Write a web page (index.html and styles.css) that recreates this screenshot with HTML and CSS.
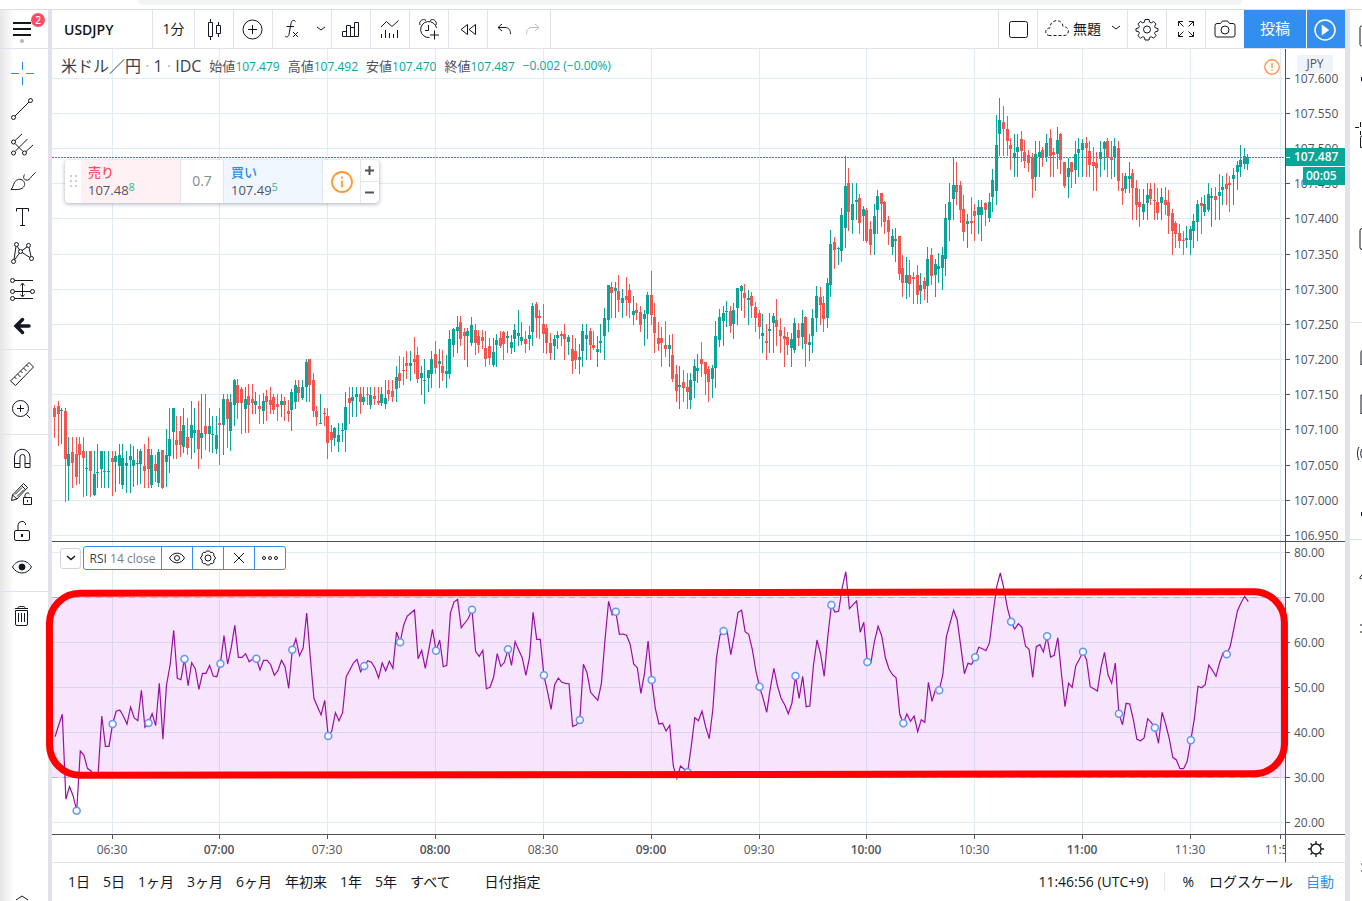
FILE: index.html
```html
<!DOCTYPE html>
<html lang="ja">
<head>
<meta charset="utf-8">
<title>USDJPY</title>
<link rel="stylesheet" href="styles.css">
</head>
<body>
<div class="page">
  <div class="browser-strip"><div class="address-pill"></div></div>
  <div class="workspace">
    <nav class="rail" aria-label="描画ツール">
      <button class="menu-btn" aria-label="メニュー">
        <svg class="icon" viewBox="0 0 28 28"><path d="M5 8h18M5 14h18M5 20h18" stroke-width="2"/></svg>
        <span class="badge">2</span><span class="dot"></span>
      </button>
      <div class="group">
        <button class="tool" aria-label="十字"><svg class="icon blue" viewBox="0 0 28 28"><path d="M14.5 3v8M14.5 18v8M3 14.5h8M18 14.5h8"/></svg></button>
        <button class="tool" aria-label="トレンドライン"><svg class="icon" viewBox="0 0 28 28"><circle cx="5.5" cy="22.5" r="2"/><circle cx="22.5" cy="5.5" r="2"/><path d="M7 21L21 7"/></svg></button>
        <button class="tool" aria-label="ピッチフォーク"><svg class="icon" viewBox="0 0 28 28"><circle cx="5.5" cy="11" r="2"/><circle cx="5.5" cy="22" r="2"/><circle cx="16.5" cy="22" r="2"/><path d="M7 9.500l7-6.500M7 20.500L19.500 8M18 20.500l7-6.500M7 12.500l8 8"/></svg></button>
        <button class="tool" aria-label="ブラシ"><svg class="icon" viewBox="0 0 28 28"><path d="M3 22.500c2-2 2-4 3.500-7 2-3.500 6-4 8.500-2 2.500 2.500 2 5.500-.5 7.500-2.500 2-6.500 1.500-11.500 1.500zM16.500 7.500c-1.500 2.500-1 5 1.500 5.500 2.500.5 4-1 5.500-3.500l4-4"/></svg></button>
        <button class="tool" aria-label="テキスト"><svg class="icon" viewBox="0 0 28 28"><path d="M8.500 8.500v-3h12v3M14.500 5.500v17M12 22.500h5"/></svg></button>
        <button class="tool" aria-label="パターン"><svg class="icon" viewBox="0 0 28 28"><circle cx="8.500" cy="5.500" r="2"/><circle cx="20.500" cy="6.500" r="2"/><circle cx="12.500" cy="12.500" r="2"/><circle cx="5.500" cy="22.500" r="2"/><circle cx="23.500" cy="19.500" r="2"/><path d="M8 7.500L6 20.500M9.500 7.500l2 3.500M14 11.500L19 8M21 8.500l2 9M6.500 21l5-7M14 13.500l8 5"/></svg></button>
        <button class="tool" aria-label="予測"><svg class="icon" viewBox="0 0 28 28"><circle cx="4.500" cy="5.500" r="2"/><circle cx="4.500" cy="16.500" r="2"/><circle cx="4.500" cy="23.500" r="2"/><circle cx="24.500" cy="16.500" r="2"/><path d="M6.500 5.500H25M6.500 16.500h16M6.500 23.500H25M14.500 9v12M12.500 10.500l2-2.500 2 2.500M12.500 19.500l2 2.500 2-2.500"/></svg></button>
        <button class="tool" aria-label="戻る矢印"><svg class="icon" viewBox="0 0 28 28"><path d="M21 15H9M14.500 8.500L8 15l6.500 6.500" stroke-width="3.500" stroke-linecap="round"/></svg></button>
      </div>
      <div class="group">
        <button class="tool" aria-label="定規"><svg class="icon" viewBox="0 0 28 28"><path d="M21 2.500l4.500 4.500L7.500 25.500 2.500 21zM18.500 5l2 2M15.500 8l3 3M12.500 11l2 2M9.500 14l3 3M6.500 17l2 2"/></svg></button>
        <button class="tool" aria-label="ズーム"><svg class="icon" viewBox="0 0 28 28"><circle cx="12.500" cy="12.500" r="8"/><path d="M12.500 9v7M9 12.500h7M18.500 18.500L22 22"/></svg></button>
      </div>
      <div class="group">
        <button class="tool" aria-label="マグネット"><svg class="icon" viewBox="0 0 28 28"><path d="M6.500 22.500V12a7.500 7.500 0 0 1 15.500 0v10.500h-5V12a2.500 2.500 0 0 0-5 0v10.500zM6.500 18.500H12M17 18.500h5"/></svg></button>
        <button class="tool" aria-label="描画を維持"><svg class="icon" viewBox="0 0 28 28"><path d="M3.500 19.500l1-5.500L15.500 2.500l4 4L9 18zM4.500 14l4.500 4M13.500 4.500l4 4M7 13.500l7-7M9 15.500l7-7M15.500 16.500h8v7h-8zM17 16.500V14a2.500 2.500 0 0 1 4.500-1"/><path d="M19.500 19v2"/></svg></button>
        <button class="tool" aria-label="ロック"><svg class="icon" viewBox="0 0 28 28"><rect x="6.500" y="13.500" width="15" height="10" rx="1.500"/><path d="M10 13.500V8a4 4 0 0 1 7.500-1.500v1.500"/><path d="M14 17v3" stroke-width="2"/></svg></button>
        <button class="tool" aria-label="表示"><svg class="icon" viewBox="0 0 28 28"><path d="M4.500 14c4.500-8 14.500-8 19 0-4.500 8-14.500 8-19 0z"/><circle cx="14" cy="14" r="3" class="solid"/></svg></button>
      </div>
      <div class="group last">
        <button class="tool" aria-label="削除"><svg class="icon" viewBox="0 0 28 28"><path d="M7 6.500h13M10 6.500c0-2 1-2 3.500-2s3.500 0 3.500 2M7.500 8.500h12V22a1.500 1.500 0 0 1-1.500 1.500H9A1.500 1.500 0 0 1 7.500 22zM10.500 11v9M13.500 11v9M16.500 11v9"/></svg></button>
      </div>
      <button class="rail-more" aria-label="さらに表示"><svg class="caret" viewBox="0 0 14 7"><path d="M1 6l6-4 6 4"/></svg></button>
    </nav>

    <main class="main">
      <header class="topbar">
        <button class="cell symbol">USDJPY</button>
        <button class="cell interval">1分</button>
        <button class="cell sq" aria-label="ローソク足"><svg class="icon" viewBox="0 0 28 28"><path d="M8.500 7.500h4v14h-4zM10.500 4v3.500M10.500 21.500V25M16.500 10.500h4v8h-4zM18.500 7v3.500M18.500 18.500V22"/></svg></button>
        <button class="cell sq" aria-label="比較"><svg class="icon" viewBox="0 0 28 28"><circle cx="13.500" cy="14.500" r="9.500"/><path d="M13.500 10v9M9 14.500h9"/></svg></button>
        <button class="cell wide" aria-label="インジケーター"><svg class="icon" viewBox="0 0 28 28"><path d="M17.500 6.500c-.5-1.500-4-2-4.500 2l-2 11c-.5 2.500-2.500 3-4 1.500M8.500 11.500h7.500M15 17l5 5M20 17l-5 5"/></svg><svg class="chev" viewBox="0 0 10 6"><path d="M1 1l4 3 4-3"/></svg></button>
        <button class="cell sq" aria-label="財務"><svg class="icon" viewBox="0 0 28 28"><path d="M5.500 16.500h4v5h-4zM9.500 10.500h4v11h-4zM13.500 12.500h4v9h-4zM17.500 7.500h4v14h-4z"/></svg></button>
        <button class="cell sq" aria-label="テンプレート"><svg class="icon" viewBox="0 0 28 28"><path d="M5 12l5.500-5.500 5.500 5 6.500-6M5.500 19v4M9.500 15v8M13.500 18v5M17.500 19v4M21.500 15v8"/></svg></button>
        <button class="cell sq" aria-label="アラート"><svg class="icon" viewBox="0 0 28 28"><path d="M21.500 13a8 8 0 1 0-7 9.500M5 10c-1.500-4 3-7 6-4.500M21 10c1.500-4-3-7-6-4.500M13.500 10v5.500H10M19.500 15.500v9M15 20h9"/></svg></button>
        <button class="cell sq" aria-label="リプレイ"><svg class="icon" viewBox="0 0 28 28"><path d="M13.500 9.500v10l-6.500-5zM21.500 9.500v10l-6.500-5z"/></svg></button>
        <div class="cell history">
          <button aria-label="元に戻す"><svg class="icon" viewBox="0 0 28 28"><path d="M11 9l-4 3.500 4 3.500M7 12.500h7c4 0 5.500 3 5.500 6.500"/></svg></button>
          <button aria-label="やり直し" disabled><svg class="icon faint" viewBox="0 0 28 28"><path d="M16 9l4 3.500-4 3.500M20 12.500h-7c-4 0-5.500 3-5.500 6.500"/></svg></button>
        </div>
        <div class="spacer"></div>
        <button class="cell sq left" aria-label="レイアウト"><svg class="icon" viewBox="0 0 28 28"><rect x="5.500" y="6.500" width="18" height="16" rx="2"/></svg></button>
        <button class="cell layout left"><svg class="icon" viewBox="0 0 28 28"><path class="dashed" d="M6 21.500C0 21.500.5 14 6 14 6 4.500 18.500 4.500 19 12.500c7 0 7 9 1 9z"/></svg><span>無題</span><svg class="chev" viewBox="0 0 10 6"><path d="M1 1l4 3 4-3"/></svg></button>
        <button class="cell sq left" aria-label="設定"><svg class="icon" viewBox="0 0 28 28"><path d="M12 4.500h4l.5 2.600 1.800.8 2.200-1.500 2.600 2.600-1.500 2.200.8 1.800 2.600.5v2.600l-2.600.5-.8 1.800 1.500 2.200-2.600 2.600-2.200-1.500-1.800.8-.5 2.500h-4l-.5-2.500-1.800-.8-2.200 1.500-2.600-2.600 1.500-2.200-.8-1.800-2.600-.5v-2.600l2.600-.5.8-1.800-1.500-2.200 2.600-2.600 2.200 1.500 1.800-.8z"/><circle cx="14" cy="14.500" r="3.500"/></svg></button>
        <button class="cell sq left" aria-label="全画面"><svg class="icon" viewBox="0 0 28 28"><path d="M6.500 11V6.500H11M6.500 6.500l5 5M17 6.500h4.500V11M21.500 6.500l-5 5M6.500 17v4.500H11M6.500 21.500l5-5M17 21.500h4.500V17M21.500 21.500l-5-5"/></svg></button>
        <button class="cell sq left" aria-label="スナップショット"><svg class="icon" viewBox="0 0 28 28"><path d="M6 8.500h3.500L11.500 6h5L18.500 8.500H22a2 2 0 0 1 2 2V20a2 2 0 0 1-2 2H6a2 2 0 0 1-2-2v-9.500a2 2 0 0 1 2-2z"/><circle cx="14" cy="15" r="4"/></svg></button>
        <button class="publish">投稿</button>
        <button class="play" aria-label="再生"><svg class="icon white" viewBox="0 0 28 28"><circle cx="14" cy="15" r="10"/><path class="solid" d="M11.500 11v8l5.500-4z"/></svg></button>
      </header>

      <section class="chart">
        <div class="pane">
          <svg class="plot" id="price-plot"></svg>
          <div class="legend">
            <span class="title">米ドル／円 <i>·</i> 1 <i>·</i> IDC</span>
            <span class="ohlc">始値<b>107.479</b></span>
            <span class="ohlc">高値<b>107.492</b></span>
            <span class="ohlc">安値<b>107.470</b></span>
            <span class="ohlc">終値<b>107.487</b></span>
            <b class="change">−0.002 (−0.00%)</b>
          </div>
          <svg class="warn" viewBox="0 0 16 16"><circle cx="8" cy="8" r="7.200"/><path d="M8 4v5M8 10.500v1.500"/></svg>
          <div class="order">
            <span class="grip"><svg viewBox="0 0 7 13"><path d="M0 1h2M5 1h2M0 6h2M5 6h2M0 11h2M5 11h2"/></svg></span>
            <button class="side sell"><strong>売り</strong><span>107.48<sup>8</sup></span></button>
            <span class="spread">0.7</span>
            <button class="side buy"><strong>買い</strong><span>107.49<sup>5</sup></span></button>
            <button class="info" aria-label="情報"><svg viewBox="0 0 24 24"><circle cx="12" cy="12" r="10"/><path d="M12 10.500v7M12 6.500v2"/></svg></button>
            <span class="steps"><button aria-label="増やす"><svg viewBox="0 0 9 9"><path d="M4.500 0v9M0 4.500h9"/></svg></button><button aria-label="減らす"><svg viewBox="0 0 9 9"><path d="M0 4.500h9"/></svg></button></span>
          </div>
        </div>
        <div class="axis">
          <svg class="plot" id="price-axis"></svg>
          <button class="currency">JPY</button>
        </div>

        <div class="pane lower">
          <svg class="plot" id="rsi-plot"></svg>
          <div class="rsi-head">
            <button class="fold" aria-label="折りたたむ"><svg class="chev" viewBox="0 0 10 6"><path d="M1 1l4 3.500 4-3.500" stroke-width="1.500"/></svg></button>
            <div class="rsi-box">
              <button class="rsi-name">RSI <em>14 close</em></button>
              <button aria-label="表示"><svg viewBox="0 0 20 20"><path d="M2.500 10c3.500-6.500 11.500-6.500 15 0-3.500 6.500-11.500 6.500-15 0z"/><circle cx="10" cy="10" r="2.500"/></svg></button>
              <button aria-label="設定"><svg viewBox="0 0 20 20"><path d="M8.500 3h3l1 1.500 2-.2 1.500 1.700-.2 2L17.200 9v2l-1.400 1 .2 2-1.500 1.700-2-.2-1 1.500h-3l-1-1.500-2 .2L4 14l.2-2L2.800 11V9l1.400-1L4 6l1.500-1.700 2 .2z"/><circle cx="10" cy="10" r="3"/></svg></button>
              <button aria-label="削除"><svg viewBox="0 0 20 20"><path d="M5 5l10 10M15 5L5 15"/></svg></button>
              <button aria-label="その他"><svg viewBox="0 0 20 20"><circle cx="4" cy="10" r="1.500"/><circle cx="10" cy="10" r="1.500"/><circle cx="16" cy="10" r="1.500"/></svg></button>
            </div>
          </div>
          <div class="marker"></div>
        </div>
        <div class="axis lower"><svg class="plot" id="rsi-axis"></svg></div>

        <div class="times"><svg class="plot" id="time-axis"></svg></div>
        <div class="times corner"><button aria-label="スケール設定"><svg viewBox="0 0 18 18"><circle cx="9" cy="9" r="5"/><path d="M9 1v3M9 14v3M1 9h3M14 9h3M3.500 3.500l2 2M12.500 12.500l2 2M14.500 3.500l-2 2M5.500 12.500l-2 2"/></svg></button></div>
      </section>

      <footer class="bottombar">
        <button>1日</button><button>5日</button><button>1ヶ月</button><button>3ヶ月</button><button>6ヶ月</button><button>年初来</button><button>1年</button><button>5年</button><button>すべて</button><button class="goto">日付指定</button>
        <div class="spacer"></div>
        <button class="clock">11:46:56 (UTC+9)</button>
        <button class="pct">%</button><button>ログスケール</button><button class="auto">自動</button>
      </footer>
    </main>

    <aside class="side-strip">
      <svg class="strip-icons"><path d="M13 16h-1.500a1.500 1.500 0 0 0-1.500 1.500v17a1.500 1.500 0 0 0 1.500 1.500H13M13 218.500h-1a2 2 0 0 0-2 2v17a2 2 0 0 0 2 2h1M5 117.500h4M10.500 112v5M10.500 121v4M13 126h-1a1.500 1.500 0 0 0-1.500 1.500v10h2M13 340l-2 1.500V355l2-2M13 385h-2v19l2-2M9 437c-2 3-2 10 0 13M13 438c-3 2-3 9 0 11M13 564l-2 2c-2 2-1 4 1 2M10 615h2M10 622h2M11 854h2M11 861h2"/><path class="thick" d="M11 69h2M11 504h2"/><path class="rule" d="M0 312.500h12M0 529.500h12"/></svg>
    </aside>
  </div>
</div>
<script src="chart.js"></script>
</body>
</html>
```

FILE: styles.css
```css
* { box-sizing: border-box; }
body {
  margin: 0;
  background: #fff;
  color: #131722;
  font-family: "Open Sans", "Noto Sans CJK JP", sans-serif;
  font-size: 14px;
}
button {
  margin: 0;
  padding: 0;
  border: 0;
  background: none;
  color: inherit;
  font: inherit;
  cursor: pointer;
}
svg {
  display: block;
  fill: none;
  stroke: currentColor;
  stroke-width: 1;
}
.page { display: flex; flex-direction: column; height: 100vh; min-height: 760px; overflow: hidden; }
.browser-strip { flex: none; height: 10px; padding: 0 120px 0 138px; border-bottom: 1px solid #dadce0; }
.address-pill { height: 5px; border-radius: 0 0 10px 10px; background: #f1f3f4; }
.workspace { flex: 1; display: flex; min-height: 0; }
.spacer { flex: 1; }
.icon { width: 28px; height: 28px; flex: none; }
.icon .solid { fill: currentColor; }
.blue { color: #2a8cf0; }
.white { color: #fff; stroke-width: 1.5; }
.faint { color: #b8bbc4; }
.chev { width: 10px; height: 6px; }
.dashed { stroke-dasharray: 3 2; }

/* drawing tools */
.rail {
  flex: none;
  width: 52px;
  display: flex;
  flex-direction: column;
  border-right: 4px solid #e0e3eb;
  background: linear-gradient(90deg, #e6e6e6, #fff 14px);
  overflow: hidden;
}
.menu-btn { position: relative; height: 39px; padding: 0 12px 0 8px; border-bottom: 1px solid #e0e3eb; }
.badge {
  position: absolute;
  top: 3px;
  right: 3px;
  width: 14px;
  height: 14px;
  border-radius: 7px;
  background: #ff4a68;
  color: #fff;
  font-size: 10px;
  font-weight: 600;
  line-height: 14px;
}
.dot { position: absolute; left: 20px; bottom: 5px; width: 4px; height: 4px; border-radius: 2px; background: #b2b5be; }
.group { padding: 6px 0; border-bottom: 1px solid #e0e3eb; }
.group.last { border: 0; }
.tool { display: flex; align-items: center; width: 48px; height: 36px; padding-left: 8px; }
.rail-more { margin-top: auto; height: 7px; padding-left: 15px; overflow: hidden; }
.caret { width: 14px; height: 7px; }

/* top toolbar */
.main { flex: 1; min-width: 0; display: flex; flex-direction: column; }
.topbar { flex: none; display: flex; height: 39px; border-bottom: 1px solid #e0e3eb; }
.cell { flex: none; display: flex; align-items: center; justify-content: center; border-right: 1px solid #e0e3eb; }
.cell.left { border-right: 0; border-left: 1px solid #e0e3eb; }
.cell.sq { width: 39px; }
.cell.wide { width: 59px; gap: 10px; }
.symbol { width: 101px; justify-content: flex-start; padding-left: 12px; font-size: 14px; font-weight: 600; }
.interval { width: 42px; padding-bottom: 2px; }
.history { width: 63px; }
.layout { width: 90px; gap: 1px; padding-bottom: 2px; }
.layout .chev { margin-left: 9px; }
.publish { width: 62px; padding-bottom: 3px; background: #338fef; color: #fff; font-size: 15px; }
.play { width: 39px; padding-left: 4px; border-left: 1px solid #fff; background: #338fef; }

/* chart grid */
.chart {
  flex: 1;
  min-height: 0;
  display: grid;
  grid-template-columns: minmax(0, 1fr) 60px;
  grid-template-rows: minmax(0, 1fr) 293px 28px;
}
.pane, .axis, .times { position: relative; min-width: 0; min-height: 0; }
.axis { border-left: 1px solid #50535e; }
.lower, .times { border-top: 1px solid #50535e; }
.plot { position: absolute; inset: 0; width: 100%; height: 100%; overflow: hidden; shape-rendering: crispEdges; }
.plot text { fill: #50535e; stroke: none; font-size: 12px; }
.plot .hour { font-weight: 600; }
.plot .tag-text { fill: #fff; font-weight: 600; }
.plot .grid { stroke: #e1ecf2; }
.plot .tick { stroke: #50535e; }
.plot .up { fill: #08a699; stroke: none; }
.plot .down { fill: #f7544f; stroke: none; }
.plot .last { stroke: #08a699; stroke-dasharray: 2 1; }
.plot .band { fill: rgba(180, 45, 235, 0.12); stroke: none; }
.plot .limit { stroke: #b9b4c0; stroke-dasharray: 6 5; }
.plot .rsi { stroke: #990fa3; stroke-width: 1.2; shape-rendering: auto; }
.plot .knot { fill: #fbf6ff; stroke: #6299f0; stroke-width: 1.5; shape-rendering: auto; }
.legend {
  position: absolute;
  top: 4px;
  left: 6px;
  display: flex;
  align-items: center;
  gap: 8px;
  height: 24px;
  padding: 0 3px;
  color: #50535e;
  font-size: 13px;
  white-space: nowrap;
}
.title { color: #3c404b; font-size: 16px; }
.title i { color: #b2b5be; font-style: normal; }
.legend b { color: #08a699; font-size: 12px; font-weight: 500; }
.warn { position: absolute; top: 10px; right: 5px; width: 16px; height: 16px; color: #ff9850; stroke-width: 1.5; }
.order {
  position: absolute;
  top: 111px;
  left: 13px;
  display: flex;
  height: 43px;
  border-radius: 4px;
  background: #fff;
  box-shadow: 0 1px 4px rgba(60, 70, 100, 0.45);
  overflow: hidden;
}
.grip { display: flex; align-items: center; padding: 0 4px 0 5px; color: #ccced4; }
.grip svg { width: 7px; height: 13px; stroke-width: 2; }
.side { width: 100px; padding: 0 0 2px 7px; text-align: left; color: #50535e; font-size: 13px; line-height: 18px; }
.side strong, .side span { display: block; }
.side strong { font-size: 13px; font-weight: 500; }
.side sup { color: #1fbf8f; font-size: 11px; line-height: 0; vertical-align: 4px; }
.sell { background: #fff1f3; border-right: 1px solid #e4e7ee; }
.sell strong { color: #ff4a68; }
.buy { background: #f0f6ff; border-right: 1px solid #e4e7ee; border-left: 1px solid #e4e7ee; }
.buy strong { color: #2a8cf0; }
.spread { width: 42px; color: #868993; line-height: 42px; text-align: center; }
.info { width: 37px; padding-left: 7px; color: #ff9a33; }
.info svg { width: 24px; height: 24px; stroke-width: 1.8; }
.steps { display: flex; flex-direction: column; width: 19px; border-left: 1px solid #e4e7ee; color: #50535e; }
.steps button { flex: 1; padding-left: 4px; }
.steps button + button { border-top: 1px solid #e4e7ee; }
.steps svg { width: 9px; height: 9px; stroke-width: 2; }
.currency { position: absolute; top: 6px; left: 11px; width: 36px; height: 18px; border-radius: 3px; background: #f0f3fa; color: #50535e; font-size: 12px; line-height: 18px; }
.rsi-head { position: absolute; top: 4px; left: 8px; display: flex; align-items: center; gap: 2px; }
.fold { display: flex; align-items: center; justify-content: center; width: 21px; height: 21px; border: 1px solid #d1d4dc; border-radius: 3px; background: #fff; }
.rsi-box { display: flex; height: 24px; border: 1px solid #338fef; border-radius: 3px; background: #fff; overflow: hidden; }
.rsi-box button { width: 31px; padding: 0 5px; border-left: 1px solid #338fef; }
.rsi-box .rsi-name { width: 77px; padding: 0; border: 0; color: #3c404b; font-size: 12px; white-space: nowrap; }
.rsi-name em { color: #787b86; font-style: normal; }
.rsi-box svg { width: 20px; height: 20px; }
.marker {
  position: absolute;
  z-index: 2;
  top: 47px;
  right: -3px;
  left: -6px;
  height: 189px;
  border: 7px solid #f00;
  border-radius: 34px;
  transform: rotate(-0.07deg);
  pointer-events: none;
}
.corner { display: flex; align-items: center; justify-content: center; border-left: 1px solid #50535e; }
.corner svg { width: 18px; height: 18px; stroke-width: 1.3; }

/* bottom toolbar */
.bottombar { flex: none; display: flex; align-items: center; gap: 14px; height: 39px; padding: 0 11px 2px 16px; border-top: 1px solid #e0e3eb; white-space: nowrap; }
.bottombar button + button { margin-left: -1px; }
.bottombar .goto { margin-left: 20px; }
.clock { padding-right: 16px; border-right: 1px solid #e0e3eb; }
.pct { padding: 0 2px 0 4px; }
.auto { color: #338fef; }

/* right sidebar edge */
.side-strip { flex: none; width: 17px; border-left: 5px solid #e0e3eb; overflow: hidden; }
.strip-icons { width: 12px; height: 100%; }
.strip-icons .thick { stroke-width: 4; }
.strip-icons .rule { stroke: #e0e3eb; }
```

FILE: chart.js
```javascript
const NS = "http://www.w3.org/2000/svg";

function add(parent, name, attrs, text) {
  const el = document.createElementNS(NS, name);
  for (const key in attrs) el.setAttribute(key, attrs[key]);
  if (text !== undefined) el.textContent = text;
  parent.appendChild(el);
  return el;
}
const byId = (id) => document.getElementById(id);

/* One bar per minute from 06:14. */
const barX = (i) => 2.6 + 3.594 * i;

/* Each series part: vertical offset of the part, then bars as
   direction + high, body top, body bottom, low (three units per pixel). */
const series = [
  [151, `r615 625 651 713,r603 618 641 738,g625 630 633 731,r624 633 776 905,g711 762 797 903,r711 756 788 863,r711 762 830 855,r711 733 765 851,r711 753 773 891,g753 803 806 888,r753 753 812 891,g753 822 885 887,g732 815 818 863,g753 753 807 863,g753 812 815 863,g753 812 815 863,r753 774 786 888,g753 768 786 875,g732 765 797 851,g732 774 855 866,g753 788 797 878,g732 768 780 878,g738 780 797 861,g747 788 791 855,g747 753 792 851,r732 797 812 863,r711 747 807 863,g747 765 855 863,r765 792 812 845,g747 756 849 861,r750 750 863 866,g687 765 785 861,g625 717 768 818,g625 625 695 776,r648 720 735 776,r648 693 735 771,g625 675 741 759,r653 711 744 765,g603 675 714 777,g625 690 699 759,r603 690 747 806`],
  [231, `g342 459 473 537,r342 438 461 510,g384 438 461 516,g408 461 464 519,g408 465 507 522,r384 429 435 555,g342 357 435 525,r342 357 416 504,g342 366 453 513,g297 300 375 438,r297 315 368 417,r321 327 369 462,g321 357 387 459,r312 348 375 459,r312 357 369 402,g336 363 374 402,r345 378 387 432,g339 363 393 432,r330 348 366 423,r321 360 375 402,r342 351 390 402,r342 372 381 423,g342 363 375 411,r351 363 374 423,r360 393 402 426,g327 336 390 453,g300 315 366 387,r300 321 339 366,g300 321 354 360,g237 246 321 366,r237 237 315 366,r279 300 393 411,r378 393 411 438,g342 429 432 432,r384 399 402 438,r384 408 489 537,r435 456 480 516,g441 444 474 498,g429 465 486 516,g429 450 453 486,g336 381 450 516,r321 354 369 432,g321 351 363 411,g321 342 351 411,r321 342 366 402,g321 351 366 375,r321 342 345 375,g321 345 375 387,r321 348 357 375,r321 363 369 375,g321 342 369 378,g300 354 372 387,r300 330 342 363,r300 333 351 366,g258 291 327 366,r228 279 303 324,r231 270 273 315,r213 249 258 297,g213 249 258 303,r171 237 246 282,r201 225 297 309,g258 279 294 345,g237 300 303 372,g270 270 294 336,g213 237 282 324,r183 222 264 282,g207 243 252 324,r210 258 279 303,g225 273 282 324,g150 177 282 297,g144 147 195 231,g108 141 153 219,r108 126 177 198,r144 156 168 240,g144 153 168 261,g111 135 189 198,r132 150 189 225,r150 168 195 219,r150 171 183 207,r153 204 237 261,r174 198 234 255,g174 216 255 261,g162 180 195 261,r153 174 198 204,r153 156 192 240,g153 168 174 219,g165 186 204 222,g132 150 177 216,g90 159 168 198`],
  [191, `g246 291 303 315,r273 297 312 339,g258 285 297 330,g189 198 276 318,r186 192 234 294,r210 228 234 297,r192 252 282 339,r252 264 309 342,r279 309 339 360,g285 297 318 360,g273 285 294 327,r273 282 288 318,r252 282 297 360,g285 291 306 345,r285 327 363 402,r294 333 360 387,g312 351 360 402,g252 273 333 381,g252 285 297 360,r264 273 315 360,r273 315 324 330,g288 327 336 381,g252 303 309 339,g204 234 288 360,g135 135 240 276,r126 141 159 234,g126 144 153 234,r105 153 180 216,g147 174 189 234,r111 168 180 228,r132 150 189 234,g168 213 225 255,r189 210 219 240,r198 216 255 276,g210 222 237 318,g156 165 222 297,r93 165 225 255,r189 231 279 339,r246 294 312 333,r261 294 309 381,r243 315 327 351,g285 315 327 381,r282 345 417 426,r375 402 453 486,g378 435 441 507,r390 426 444 486,r399 441 456 507,g399 420 480 507,g357 378 423 474,g342 384 393 429,r306 357 372 411,r366 366 402 465,r378 387 426 486,g375 384 417 474,g243 288 384 444,g207 231 300 321,g198 219 243 318,g183 213 216 261,r198 213 258 279,g189 210 252 297,g144 144 204 255,g135 138 153 213,r132 159 174 234,g150 174 180 255,r156 168 198 234,r186 201 234 276,r210 219 261 297,g222 279 288 339,r252 303 309 360,g219 267 273 339,g219 228 249 339,r177 240 261 318,r234 270 288 339,r261 288 297 381,r276 291 315 345,g279 297 324 381,g234 249 330 339,r249 270 294 318,g210 249 291 327,r228 231 312 381,g282 306 315 363,g207 234 288 339,g138 168 234 276,r141 171 195 255,r168 189 237 276,g114 129 234 264`],
  [41, `g420 462 585 621,r441 456 480 537,g471 474 477 525,g354 375 483 516,g198 288 414 474,r234 279 366 423,g279 342 390 432,g279 330 336 390,r312 324 399 432,g348 357 378 453,r354 360 453 459,r393 417 465 495,g342 378 432 495,g300 318 360 432,r309 309 342 411,r333 336 396 432,r378 390 426 465,g417 438 471 495,g414 447 453 516,r438 438 552 570,r495 534 579 621,g501 555 579 627,r510 555 582 621,r546 561 567 642,r525 555 615 642,g549 585 603 642,r561 573 597 630,g471 507 588 639,r474 495 558 585,g507 522 555 621,g489 528 537 579,g471 495 534 600,g342 384 507 558,g279 336 390 453,g204 285 327 390,r216 285 306 345,r273 285 360 399,r315 357 426 453,g372 393 402 474,r321 393 399 432,r342 363 378 453,g330 351 375 432,g330 351 375 453,r336 339 360 408,g309 336 384 396,g237 270 321 366,g75 165 303 345,g24 90 132 198,r48 96 117 198,r78 117 153 198,r144 165 177 240,g132 189 204 261,g132 171 186 261,r123 147 183 216,r150 186 213 234,r180 195 219 246,r189 201 267 324,g153 192 261 303,g153 186 201 261,r171 180 204 231,g132 159 201 216,r117 144 198 261,r174 186 195 261,g111 150 192 237,r129 132 210 252,r216 216 288 294,g204 234 261 324,r216 216 246 294,g153 192 240 282,g144 177 189 261,g147 159 180 261,r141 159 174 261,r153 183 225 261,r171 216 228 303,r186 219 234 303,g153 186 207 261,g153 156 177 240,r144 153 201 261,r153 201 210 267,g144 168 201 261,r153 174 273 303,r249 294 303 345,g249 258 297 309,g216 258 267 309,r237 249 294 390,r270 294 345 390,r297 336 351 411,g297 342 366 390,g279 315 339 390,r279 297 327 345,r279 330 333 390,r294 336 369 390,g294 321 339 390,r291 330 345 375,r300 336 378 432,r357 369 423 495,r393 399 432 474,r402 429 453 474,r423 450 453 495,g408 444 450 474,g408 417 450 495,g372 393 423 474,g330 342 396 453,r321 339 348 432,g315 342 366 378,g279 312 360 366,g294 318 324 411,r291 318 330 390,g252 306 318 390,g258 291 300 345,r249 282 297 345,r258 279 285 366,g234 255 267 345,g213 225 246 300,g165 210 231 261,g174 198 222 237,g192 201 222 240`]
];

/* RSI readings: 112 is level 70, 135 units are ten points. */
const rsi = [530,495,463,718,680,707,752,573,585,625,633,648,638,468,559,559,492,454,450,469,492,441,474,482,391,502,489,461,497,370,538,375,315,211,355,359,297,377,308,326,388,340,340,316,348,350,311,227,312,263,196,292,292,281,305,297,296,330,301,301,314,346,332,301,321,385,269,236,287,265,159,292,415,440,465,421,
528,513,458,482,458,350,330,309,298,335,318,302,307,324,354,309,333,304,325,216,247,195,168,159,150,296,271,325,268,208,272,240,320,316,159,126,118,203,189,175,149,274,289,271,386,382,352,281,319,307,268,316,245,270,294,346,292,157,238,238,346,395,448,374,354,367,370,371,499,495,480,313,338,397,409,421,370,240,124,165,155,223,222,226,252,312,323,400,340,243,360,445,492,490,513,496,618,655,618,627,637,560,473,482,453,500,536,450,295,225,213,215,284,225,157,151,
215,223,268,333,380,415,457,385,325,378,415,434,461,430,348,415,349,440,438,318,240,282,349,230,135,156,154,83,35,146,134,123,217,187,306,308,243,199,227,292,326,344,353,462,490,462,484,468,515,479,487,367,424,388,391,345,230,190,151,180,260,341,310,313,292,262,266,272,248,160,80,39,86,145,185,207,191,202,259,268,352,260,254,276,229,291,286,233,340,440,370,382,317,298,275,300,380,386,393,323,277,345,370,309,461,494,430,432,478,538,542,
534,476,488,503,550,457,492,535,592,600,626,626,604,541,475,379,383,374,315,331,349,308,278,283,258,205,152,128,109,125];

const times = [[60,"06:30"],[167,"07:00"],[275,"07:30"],[383,"08:00"],[491,"08:30"],[599,"09:00"],[707,"09:30"],[814,"10:00"],[922,"10:30"],[1030,"11:00"],[1138,"11:30"],[1228,"11:55"]];

function verticalGrid(svg) {
  for (const [x] of times) add(svg, "line", { class: "grid", x1: x + 0.5, x2: x + 0.5, y1: 0, y2: "100%" });
}

/* price pane */
const price = byId("price-plot");
const priceAxis = byId("price-axis");
verticalGrid(price);
for (let n = 0; n < 14; n++) {
  const y = Math.floor(29.2 + 35.17 * n) + 0.5;
  add(price, "line", { class: "grid", x1: 0, x2: "100%", y1: y, y2: y });
  add(priceAxis, "line", { class: "tick", x1: 0, x2: 4, y1: y, y2: y });
  add(priceAxis, "text", { x: 8, y: y + 4 }, (107.6 - n * 0.05).toFixed(3));
}
let index = 0;
for (const [base, bars] of series) {
  for (const bar of bars.split(",")) {
    const kind = bar[0] === "g" ? "up" : "down";
    const [high, top, bottom, low] = bar.slice(1).split(" ").map((v) => Math.round(base + v / 3));
    const x = Math.floor(barX(index++));
    add(price, "rect", { class: kind, x: x, y: high, width: 1, height: low - high });
    add(price, "rect", { class: kind, x: x - 1, y: top, width: 3, height: Math.max(1, bottom - top) });
  }
}
add(price, "line", { class: "last", x1: 0, x2: "100%", y1: 108.5, y2: 108.5 });
add(priceAxis, "rect", { class: "up", x: 0, y: 99, width: 60, height: 18 });
add(priceAxis, "line", { x1: 0, x2: 4, y1: 108.5, y2: 108.5, stroke: "#fff" });
add(priceAxis, "text", { class: "tag-text", x: 8, y: 112 }, "107.487");
add(priceAxis, "rect", { class: "up", x: 17, y: 118, width: 43, height: 18 });
add(priceAxis, "text", { class: "tag-text", x: 20, y: 131 }, "00:05");

/* RSI pane */
const rsiPlot = byId("rsi-plot");
const rsiAxis = byId("rsi-axis");
const levelY = (v) => 18 + v / 3;
verticalGrid(rsiPlot);
for (let n = 0; n < 7; n++) {
  const y = 10.5 + 45 * n;
  add(rsiPlot, "line", { class: "grid", x1: 0, x2: "100%", y1: y, y2: y });
  add(rsiAxis, "line", { class: "tick", x1: 0, x2: 4, y1: y, y2: y });
  add(rsiAxis, "text", { x: 8, y: y + 4 }, (80 - 10 * n).toFixed(2));
}
add(rsiPlot, "rect", { class: "band", x: 0, y: 55, width: "100%", height: 181 });
for (const y of [55.5, 235.5]) add(rsiPlot, "line", { class: "limit", x1: 0, x2: "100%", y1: y, y2: y });
add(rsiPlot, "polyline", { class: "rsi", points: rsi.map((v, i) => (barX(i) + 0.5).toFixed(1) + "," + levelY(v).toFixed(1)).join(" ") });
for (let i = 6; i < rsi.length; i += 10) add(rsiPlot, "circle", { class: "knot", cx: barX(i) + 0.5, cy: levelY(rsi[i]), r: 3.5 });

/* time axis */
const timeAxis = byId("time-axis");
for (const [x, label] of times) {
  add(timeAxis, "line", { class: "tick", x1: x + 0.5, x2: x + 0.5, y1: 0, y2: 4 });
  add(timeAxis, "text", { class: label.endsWith(":00") ? "hour" : "half", x: x, y: 19, "text-anchor": "middle" }, label);
}
```
